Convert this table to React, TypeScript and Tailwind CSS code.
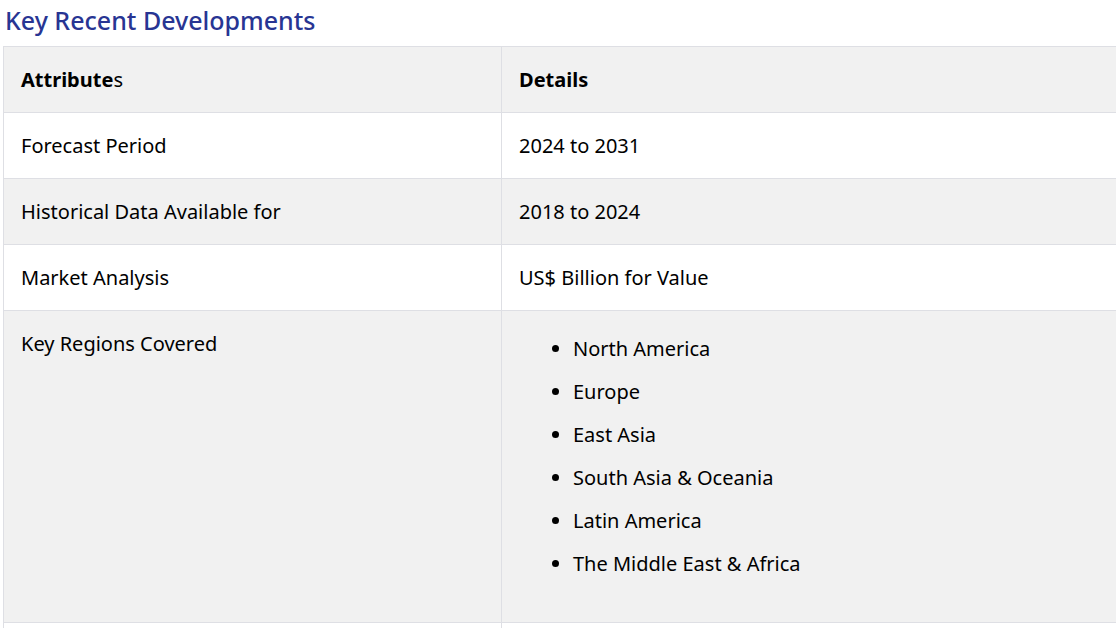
const rows = [
  { label: "Forecast Period", value: "2024 to 2031" },
  { label: "Historical Data Available for", value: "2018 to 2024" },
  { label: "Market Analysis", value: "US$ Billion for Value" },
];

const regions = [
  "North America",
  "Europe",
  "East Asia",
  "South Asia & Oceania",
  "Latin America",
  "The Middle East & Africa",
];

const cell = "border border-[#dedfe4] px-[17px] py-[18px] leading-[29px] align-top text-left";

export default function App() {
  return (
    <div className="w-[1116px] h-[628px] overflow-hidden bg-white text-black font-['Segoe_UI','Noto_Sans',sans-serif] text-[20px]">
      <h2 className="pl-[5px] pt-[2px] mb-[8px] leading-[36px] text-[25px] font-medium text-[#283593]">
        Key Recent Developments
      </h2>
      <table className="ml-[3px] w-[1200px] table-fixed border-collapse">
        <colgroup>
          <col className="w-[498px]" />
          <col />
        </colgroup>
        <thead>
          <tr className="bg-[#f1f1f1]">
            <th className={cell}>
              <span className="font-bold">Attribute</span>
              <span className="font-normal">s</span>
            </th>
            <th className={`${cell} font-bold`}>Details</th>
          </tr>
        </thead>
        <tbody>
          {rows.map((r, i) => (
            <tr key={r.label} className={i % 2 === 1 ? "bg-[#f1f1f1]" : "bg-white"}>
              <td className={cell}>{r.label}</td>
              <td className={cell}>{r.value}</td>
            </tr>
          ))}
          <tr className="bg-[#f1f1f1]">
            <td className={cell}>Key Regions Covered</td>
            <td className={cell}>
              <ul className="list-disc pl-[54px] mt-[5px] mb-[26px]">
                {regions.map((r) => (
                  <li key={r} className="mb-[14px]">{r}</li>
                ))}
              </ul>
            </td>
          </tr>
          <tr className="bg-white">
            <td className={`${cell} h-[66px]`} />
            <td className={`${cell} h-[66px]`} />
          </tr>
        </tbody>
      </table>
    </div>
  );
}
